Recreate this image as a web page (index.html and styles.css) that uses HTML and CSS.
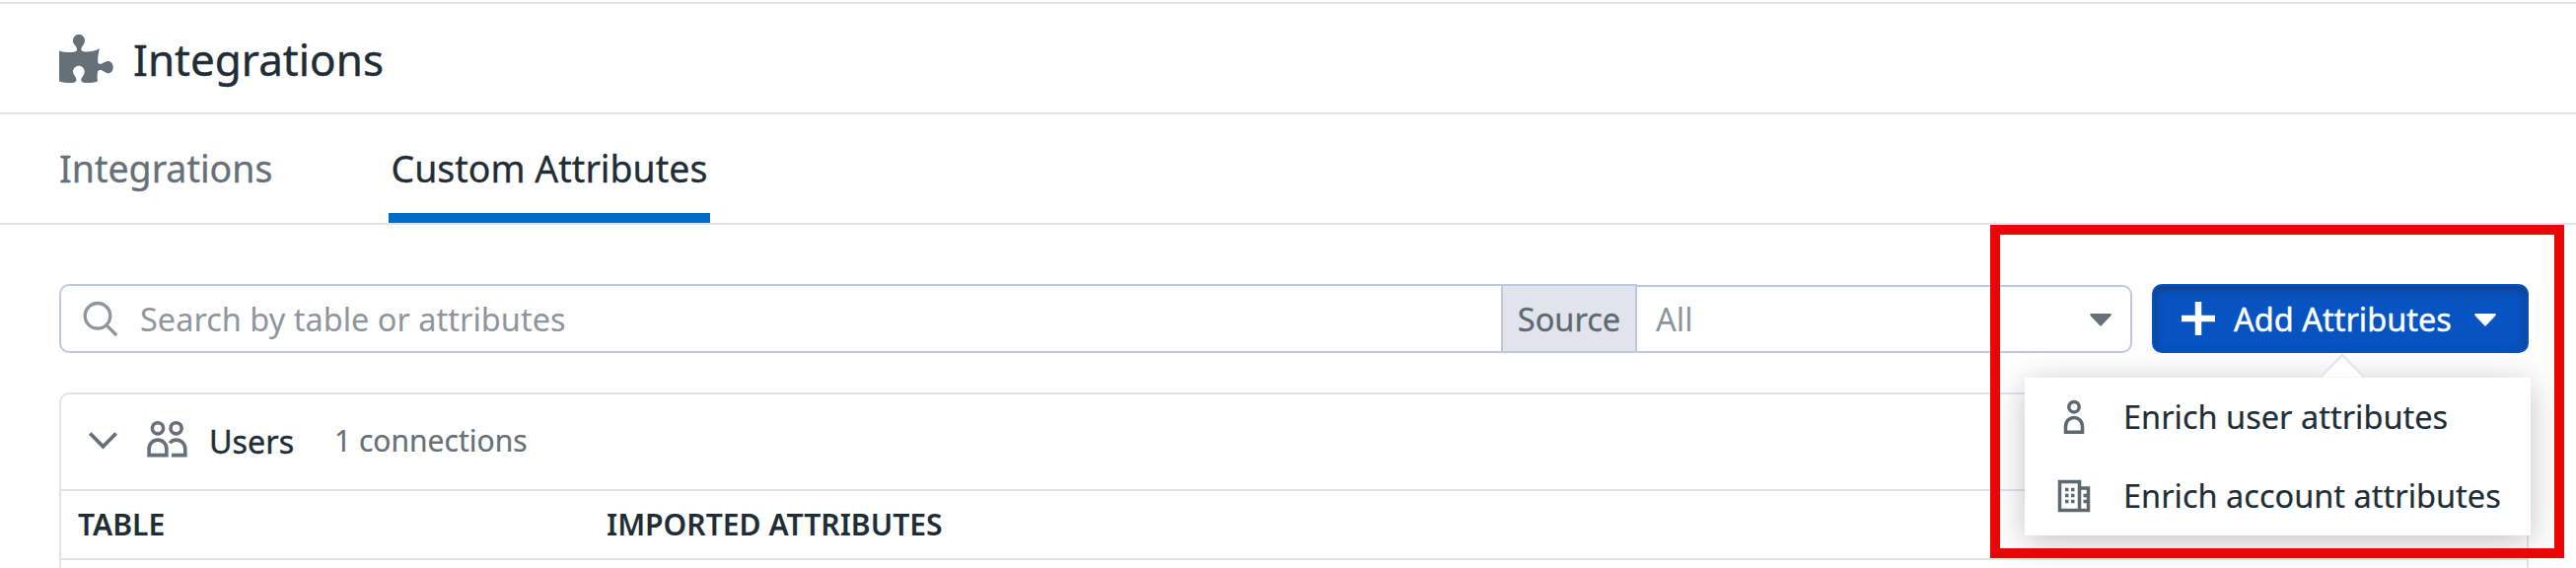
FILE: index.html
```html
<!DOCTYPE html>
<html lang="en">
<head>
<meta charset="utf-8">
<title>Integrations</title>
<link rel="stylesheet" href="styles.css">
</head>
<body>
<div class="page">
  <header class="page-header">
    <svg class="icon-puzzle" width="56" height="50" viewBox="0 0 56 50"><path d="M0 16.500C6 18.500 12 18.300 16 17.500C19 16.500 18.500 14 16.500 11.500C14.500 9 13.500 7.500 14 5.500C14.500 2 17 0 20 0S25.500 2 26 5.500C26 8 25 10 23.500 12C22 14.500 21.500 16.500 25 17.300C30 18 36 17 41 14.200C39.500 19 39 24 39.200 28C40.500 31 43 30 45 28.500C47 27 49 26.500 51 27.200C53.500 28.500 54.700 30.500 54.700 33.200S53.500 38.300 51 39.300C49 39.600 47 38.800 45 37.300C42.500 35.500 40 35.500 39 38C38.500 41 38.500 44 39 47.500C34 49.200 28 49.500 24 48.500C21.500 47 22 45 23.500 43C25 41 26 39 25.700 37.500C25.500 34 23 31.700 20 31.700S14.200 34 14 37.500C13.800 39 15 41 16.500 43C18 45.500 18 47.500 15 48.700C10 49.500 5 49 0 47.500Z"/></svg>
    <h1 class="title">Integrations</h1>
  </header>
  <nav class="tabs">
    <a class="tab">Integrations</a>
    <a class="tab tab-active">Custom Attributes</a>
  </nav>
  <main class="content">
    <div class="toolbar">
      <div class="search">
        <svg class="icon-search" width="34" height="36" viewBox="0 0 34 36"><circle cx="14" cy="15.300" r="12.800"/><path d="M22.800 24.700L33.200 35"/></svg>
        <span class="search-text">Search by table or attributes</span>
      </div>
      <div class="source">Source</div>
      <div class="select"><span class="select-text">All</span><svg class="caret" width="22" height="13" viewBox="0 0 22 13"><path d="M1 0H21Q22.500 .7 21.500 2L12 12Q11 13 10 12L.5 2Q-.5 .7 1 0Z"/></svg></div>
      <div class="button">
        <svg class="icon-plus" width="34" height="34" viewBox="0 0 34 34"><path d="M17 0V34M0 17H34"/></svg>
        <span class="button-text">Add Attributes</span>
        <svg class="caret" width="22" height="13" viewBox="0 0 22 13"><path d="M1 0H21Q22.500 .7 21.500 2L12 12Q11 13 10 12L.5 2Q-.5 .7 1 0Z"/></svg>
      </div>
    </div>
    <section class="card">
      <div class="card-head">
        <svg class="icon-chevron" width="29" height="18" viewBox="0 0 29 18"><path d="M1.300 1.500L14.500 14.800L27.700 1.500"/></svg>
        <svg class="icon-users" width="40" height="38" viewBox="0 0 40 38"><circle cx="11" cy="8.300" r="5.600"/><circle cx="29.600" cy="8.300" r="5.600"/><path d="M2.100 35.600V29A8.900 8.900 0 0 1 19.900 29V35.600ZM23.300 23.200Q25.500 20.100 29.600 20.100A9.200 9 0 0 1 38.800 29.100V35.600H25"/></svg>
        <span class="group-name">Users</span>
        <span class="group-count">1 connections</span>
      </div>
      <div class="table-head">
        <span class="col-table">TABLE</span>
        <span class="col-attrs">IMPORTED ATTRIBUTES</span>
      </div>
    </section>
  </main>
  <div class="menu">
    <svg class="menu-arrow" width="46" height="26" viewBox="0 0 46 26"><path d="M1 24.500L23 2L45 24.500"/></svg>
    <div class="menu-item">
      <svg class="menu-icon" width="34" height="34" viewBox="0 0 34 34"><circle cx="17" cy="6.700" r="5.200"/><path d="M8.500 32.300V26A8.500 8.500 0 0 1 25.500 26V32.300Z"/></svg>
      <span>Enrich user attributes</span>
    </div>
    <div class="menu-item">
      <svg class="menu-icon" width="34" height="34" viewBox="0 0 34 34"><path d="M2.500 2.500H22.500V31.500H2.500ZM22.500 9H31.500V31.500H22.500"/><path class="windows" d="M8 10.500H17.500M8 16.500H17.500M8 22.500H17.500"/><path d="M26.500 16.500H31M26.500 22.500H31"/></svg>
      <span>Enrich account attributes</span>
    </div>
  </div>
  <div class="highlight"></div>
</div>
</body>
</html>
```
FILE: styles.css
```css
* { box-sizing: border-box; }
body {
  margin: 0;
  background: #fff;
  color: #1f2d36;
  font-family: "Noto Sans", sans-serif;
  font-size: 32.500px;
}
svg { display: block; flex: none; overflow: visible; }
.page { position: relative; width: 2612px; height: 576px; padding-top: 2px; overflow: hidden; white-space: nowrap; }
.page-header {
  display: flex; align-items: center; height: 114px; padding-left: 60px; padding-top: 1px;
  border-top: 2px solid #e1e3e5; border-bottom: 2px solid #e0e4e9;
}
.icon-puzzle { margin-right: 19px; fill: #667078; }
.title { margin: 0; font-size: 44px; font-weight: 400; -webkit-text-stroke: .4px #1f2d36; }
.tabs { display: flex; gap: 118px; height: 112px; padding-left: 60px; border-bottom: 2px solid #e0e4e9; font-size: 37.500px; }
.tab { display: flex; align-items: center; padding-bottom: 2px; color: #667078; -webkit-text-stroke: .3px currentColor; }
.tab-active { width: 326px; padding-right: 1px; justify-content: center; color: #1f2d36; box-shadow: inset 0 -10px #006bc5; }
.content { padding: 60px 48px 0 60px; }
.toolbar { display: flex; height: 70px; }
.search { display: flex; align-items: center; width: 1462px; padding-left: 23px; border: 2px solid #c0c8de; border-right: 0; border-radius: 10px 0 0 10px; color: #8e959c; }
.icon-search { margin-right: 23px; fill: none; stroke: #8e959c; stroke-width: 3.300; }
.source { display: flex; align-items: center; justify-content: center; width: 138px; background: #e1e4ed; border: 2px solid #c0c8de; color: #5d6970; -webkit-text-stroke: .3px #5d6970; }
.select { display: flex; align-items: center; justify-content: space-between; width: 502px; margin-top: 1px; padding: 0 19px; border: 2px solid #c0c8de; border-left: 0; border-radius: 0 10px 10px 0; color: #8e959c; }
.caret { margin-top: 2px; fill: #667078; }
.button { display: flex; align-items: center; width: 382px; margin-left: 20px; padding-left: 28px; border: 2px solid #0753c4; border-radius: 10px; background: #0753c1; color: #fff; box-shadow: inset 0 3px 10px rgba(31,45,75,.55); }
.button-text { -webkit-text-stroke: .4px #fff; }
.icon-plus { margin-right: 19px; stroke: #fff; stroke-width: 6.500; }
.button .caret { margin-left: 23px; fill: #fff; }
.card { height: 200px; margin-top: 40px; border: 2px solid #e0e4ea; border-bottom: 0; border-radius: 10px 10px 0 0; }
.card-head { display: flex; align-items: center; height: 98px; padding-left: 28px; padding-bottom: 2px; border-bottom: 2px solid #e0e4ea; }
.icon-chevron { margin-right: 30px; fill: none; stroke: #667078; stroke-width: 3.800; }
.icon-users { margin-right: 23px; margin-bottom: 4px; fill: none; stroke: #667078; stroke-width: 3.600; }
.group-name { width: 127px; padding-bottom: 1px; font-size: 32.300px; -webkit-text-stroke: .4px #1f2d36; }
.group-count { padding-bottom: 1px; color: #667078; font-size: 30px; -webkit-text-stroke: .2px #667078; }
.table-head { display: flex; align-items: center; height: 70px; padding-left: 17px; padding-bottom: 2px; border-bottom: 2px solid #e0e4ea; font-size: 30.100px; font-weight: 600; }
.col-table { width: 536px; }
.menu { position: absolute; left: 2053px; top: 383px; width: 513px; height: 160px; background: #fff; box-shadow: 0 6px 32px rgba(0,0,0,.24); }
.menu-arrow { position: absolute; left: 299px; top: -25px; fill: #fff; stroke: #e1e4ed; stroke-width: 2; }
.menu-item { display: flex; align-items: center; height: 80px; padding-left: 33px; padding-bottom: 1px; -webkit-text-stroke: .2px #1f2d36; }
.menu-icon { margin-right: 33px; fill: none; stroke: #5d6970; stroke-width: 3.500; }
.windows { stroke-dasharray: 3.500 2.500; }
.highlight { position: absolute; left: 2018px; top: 228px; width: 582px; height: 338px; border: 10px solid #ea0606; }
```
